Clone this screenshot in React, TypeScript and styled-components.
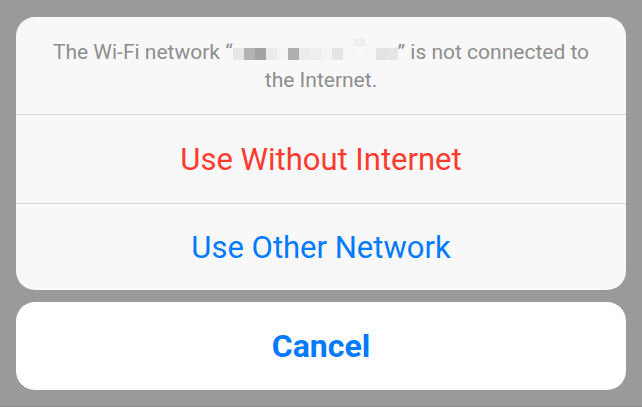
import React, { FC } from "react"
import styled, { createGlobalStyle } from "styled-components"

const GlobalStyle = createGlobalStyle`
  html, body {
    margin: 0;
    padding: 0;
    background: #9a9a9a;
  }
  body {
    font-family: Roboto, "Liberation Sans", sans-serif;
    -webkit-font-smoothing: antialiased;
  }
`

const Sheet = styled.div`
  box-sizing: border-box;
  width: 642px;
  height: 407px;
  padding: 17px 16px 0;
  display: flex;
  flex-direction: column;
  gap: 12px;
  border-bottom: 1px solid #8a8a8a;
`

const Group = styled.div<{ $bg: string }>`
  background: ${ p => p.$bg };
  border-radius: 19px;
  overflow: hidden;
  display: flex;
  flex-direction: column;
`

const Message = styled.div`
  padding: 21px 24px 20px;
  text-align: center;
  color: #8e8e8e;
  font-size: 21px;
  line-height: 28px;
`

const Masked = styled.span`
  display: inline-flex;
  align-items: flex-end;
  height: 16px;
  vertical-align: -1px;
`

const Pixel = styled.span<{ $shade: string, $raised?: boolean }>`
  display: inline-block;
  width: 11px;
  height: ${ p => p.$raised ? 8 : 12 }px;
  background: ${ p => p.$shade };
  align-self: ${ p => p.$raised ? "flex-start" : "flex-end" };
  margin-top: ${ p => p.$raised ? -6 : 0 }px;
`

const Action = styled.button<{ $color: string, $bold?: boolean, $h: number }>`
  all: unset;
  box-sizing: border-box;
  display: flex;
  align-items: center;
  justify-content: center;
  height: ${ p => p.$h }px;
  border-top: 1px solid #dadada;
  color: ${ p => p.$color };
  font-family: Roboto, "Liberation Sans", sans-serif;
  font-size: ${ p => p.$bold ? 32 : 31 }px;
  font-weight: ${ p => p.$bold ? 700 : 400 };
  cursor: pointer;
`

const CancelAction = styled(Action)`
  border-top: none;
`

const pixels: [string, boolean?][] = [
  ["#e6e6e6"], ["#b3b3b3"], ["#a3a3a3"], ["#ebebeb"], ["#f4f4f4"],
  ["#afafaf"], ["#ebebeb"], ["#eeeeee"], ["#f4f4f4"], ["#e5e5e5"],
  ["#f7f7f7"], ["#efefef", true], ["#f7f7f7"], ["#e3e3e3"], ["#e6e6e6"]
]

const App: FC = () => (
  <>
    <GlobalStyle />
    <Sheet>
      <Group $bg="#f8f8f8">
        <Message>
          The Wi-Fi network “<Masked>
            { pixels.map(([shade, raised], i) => <Pixel key={ i } $shade={ shade } $raised={ raised } />) }
          </Masked>” is not connected to the Internet.
        </Message>
        <Action $color="#ff3b30" $h={ 89 }>Use Without Internet</Action>
        <Action $color="#007aff" $h={ 87 }>Use Other Network</Action>
      </Group>
      <Group $bg="#ffffff">
        <CancelAction $color="#007aff" $bold $h={ 88 }>Cancel</CancelAction>
      </Group>
    </Sheet>
  </>
)

export default App
